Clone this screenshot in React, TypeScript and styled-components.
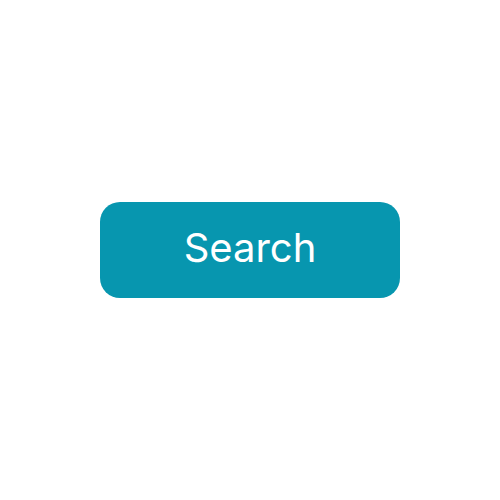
import React from "react";
import styled, { createGlobalStyle } from "styled-components";

const Global = createGlobalStyle`
  html, body { margin: 0; padding: 0; background: #ffffff; }
  #root { width: 500px; height: 500px; }
`;

const Page = styled.div`
  width: 500px;
  height: 500px;
  display: flex;
  align-items: center;
  justify-content: center;
`;

const Button = styled.button`
  width: 300px;
  height: 96px;
  border: none;
  border-radius: 20px;
  background: #0796af;
  color: #ffffff;
  font-family: Inter, "Noto Sans", sans-serif;
  font-size: 40px;
  font-weight: 400;
  display: flex;
  align-items: center;
  justify-content: center;
  padding: 0 0 6px 0;
  cursor: pointer;
`;

export default function App() {
  return (
    <>
      <Global />
      <Page>
        <Button>Search</Button>
      </Page>
    </>
  );
}
